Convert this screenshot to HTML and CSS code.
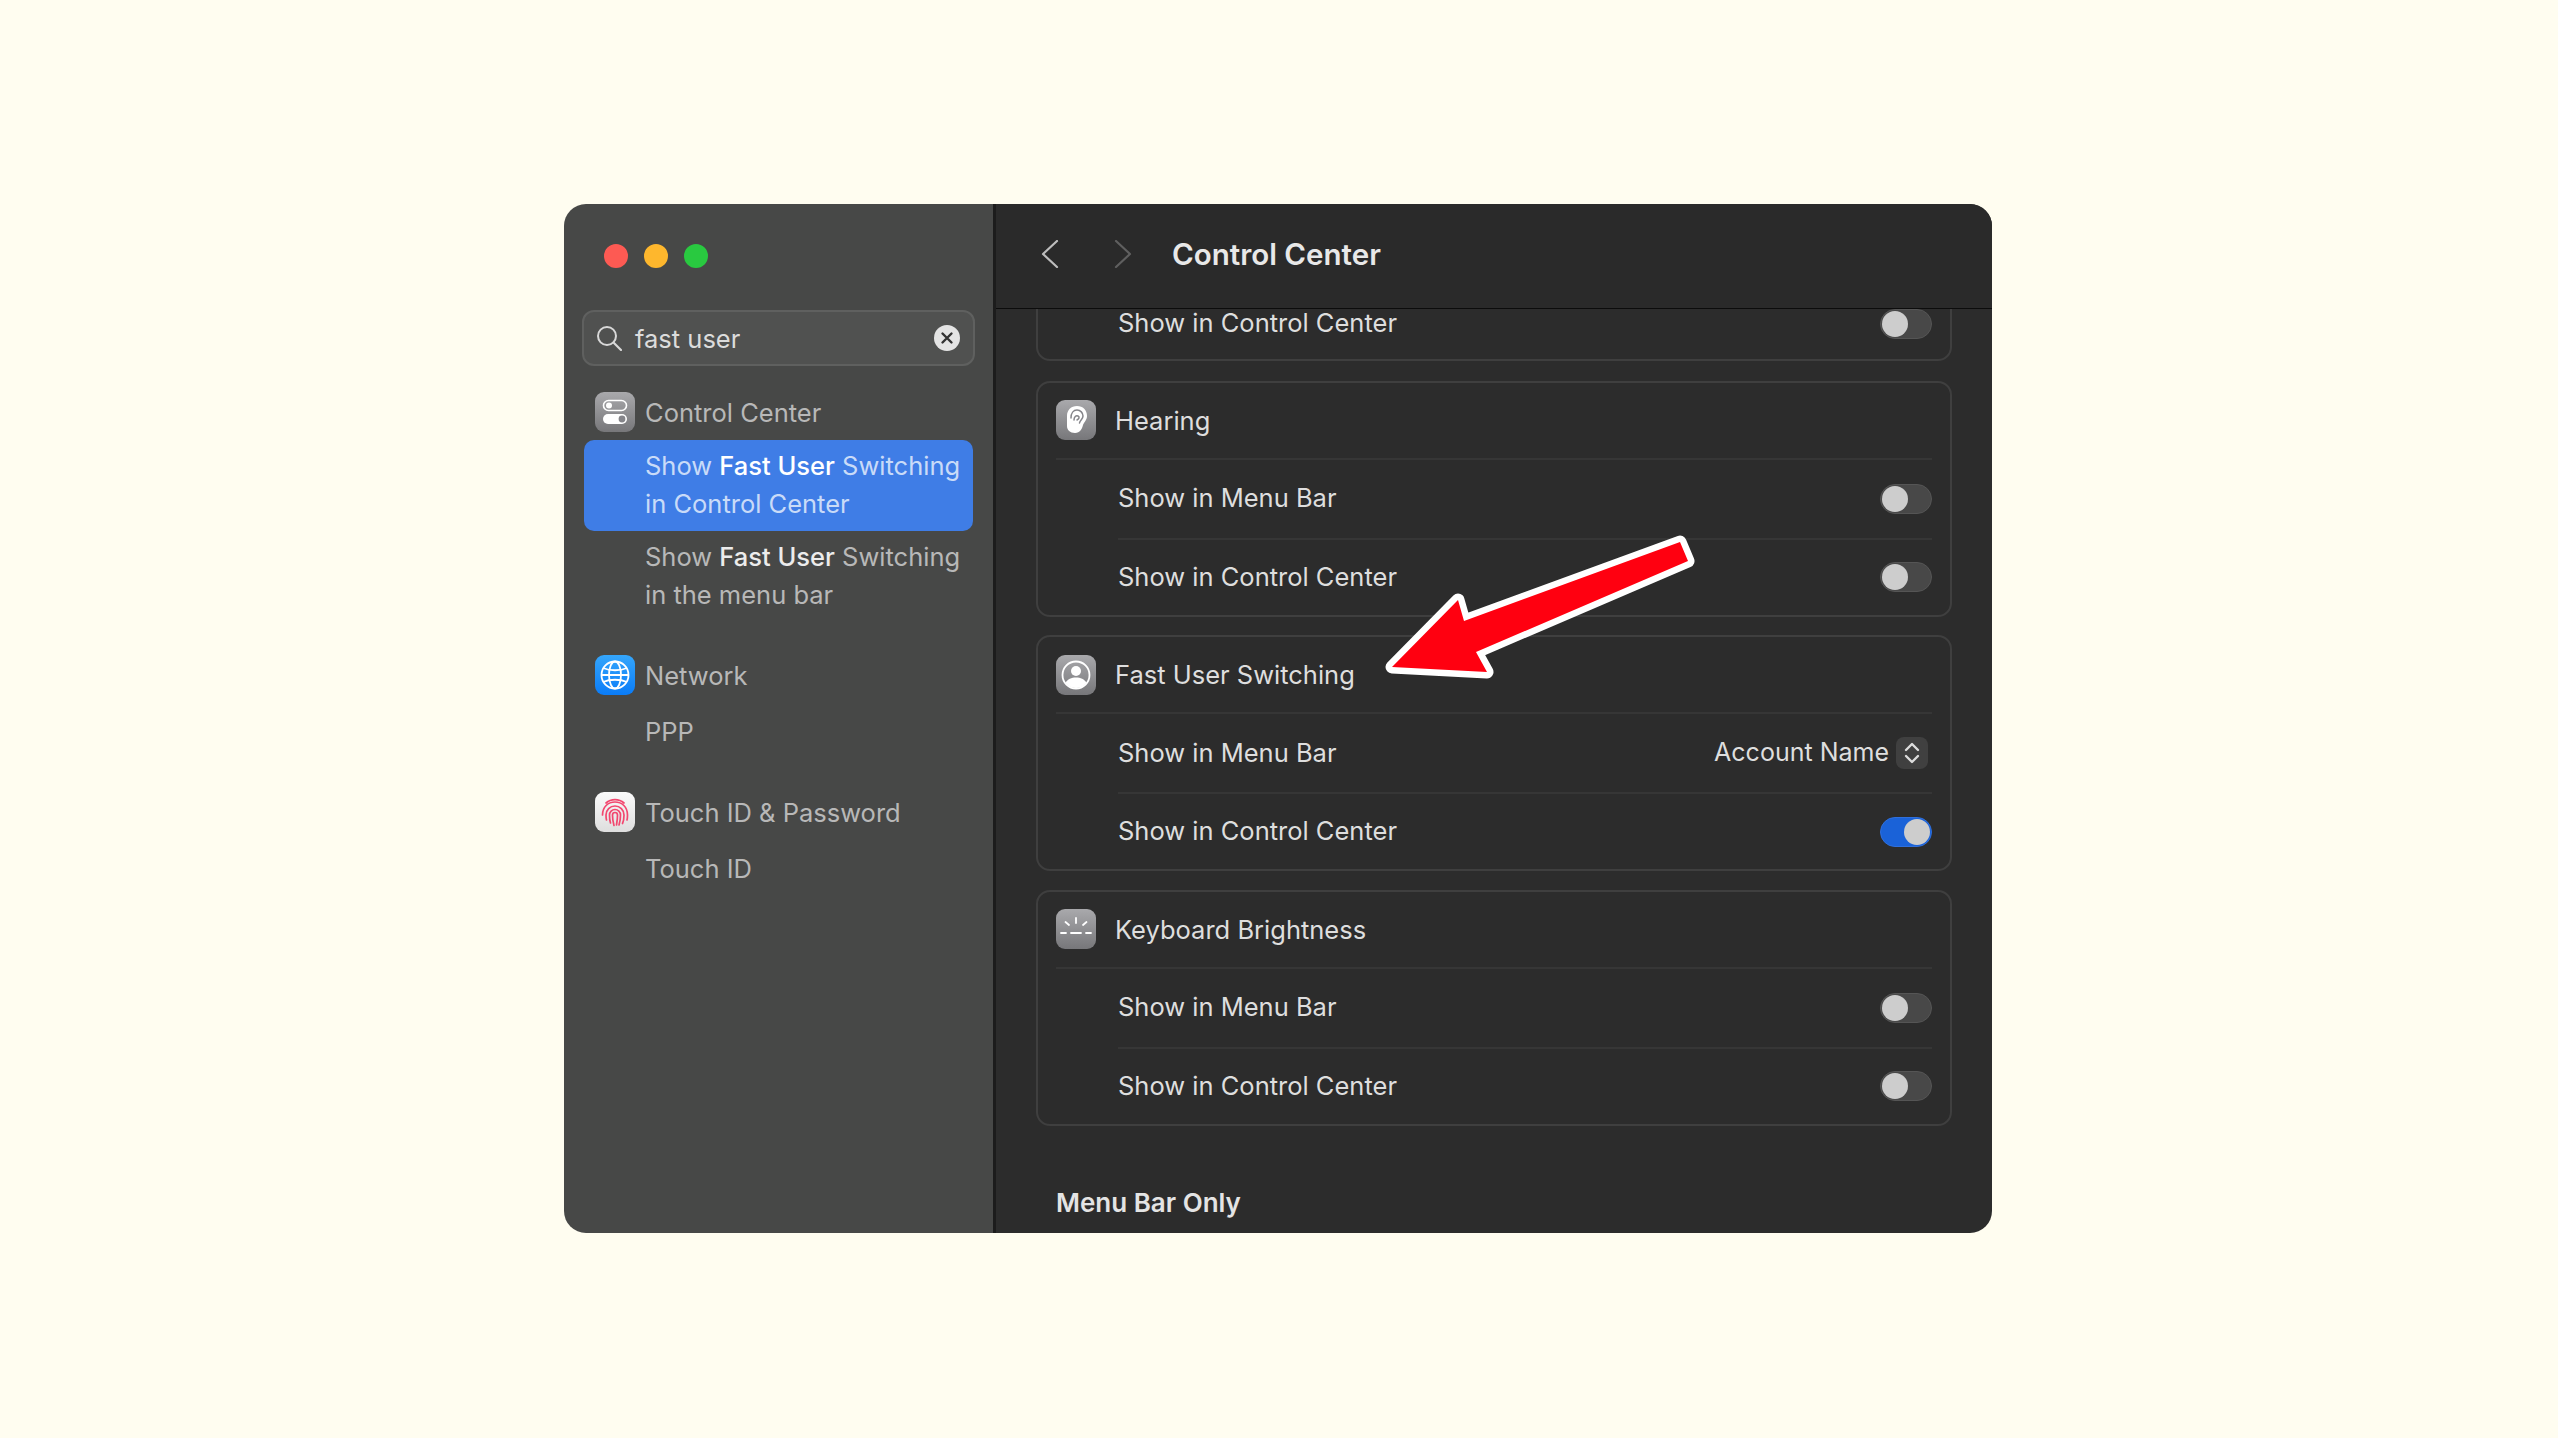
FILE: index.html
```html
<!DOCTYPE html>
<html lang="en">
<head>
<meta charset="utf-8">
<title>Control Center</title>
<link rel="stylesheet" href="styles.css">
</head>
<body>
<div class="window">
  <aside class="sidebar">
    <div class="lights">
      <span class="light red"></span>
      <span class="light yellow"></span>
      <span class="light green"></span>
    </div>
    <div class="search">
      <svg class="search-icon" viewBox="0 0 26 26"><circle cx="11" cy="11" r="9" fill="none" stroke="#d8d8d8" stroke-width="2"/><path d="M17.5 17.5L25 25" stroke="#d8d8d8" stroke-width="2.2" stroke-linecap="round"/></svg>
      <span class="search-text">fast user</span>
      <svg class="search-clear" viewBox="0 0 26 26"><circle cx="13" cy="13" r="13" fill="#e4e4e4"/><path d="M8.5 8.5l9 9M17.5 8.5l-9 9" stroke="#333" stroke-width="2.4" stroke-linecap="round"/></svg>
    </div>

    <div class="group first">
      <div class="group-head">
        <svg class="app-icon" viewBox="0 0 40 40"><rect width="40" height="40" rx="9" fill="url(#grey)"/><rect x="8.5" y="8.5" width="23" height="10" rx="5" fill="none" stroke="#fff" stroke-width="1.6"/><circle cx="14" cy="13.500" r="3" fill="#fff"/><rect x="8" y="22" width="24" height="10" rx="5" fill="#fff"/><circle cx="27" cy="27" r="3.400" fill="#85858a"/></svg>
        <span>Control Center</span>
      </div>
      <div class="result selected">Show <b>Fast User</b> Switching<br>in Control Center</div>
      <div class="result">Show <b>Fast User</b> Switching<br>in the menu bar</div>
    </div>

    <div class="group">
      <div class="group-head">
        <svg class="app-icon" viewBox="0 0 40 40"><defs><linearGradient id="blue" x1="0" y1="0" x2="0" y2="1"><stop offset="0" stop-color="#35a6fb"/><stop offset="1" stop-color="#0a7cf8"/></linearGradient></defs><rect width="40" height="40" rx="9" fill="url(#blue)"/><g fill="none" stroke="#fff" stroke-width="1.800"><circle cx="20" cy="20" r="13.500"/><ellipse cx="20" cy="20" rx="6" ry="13.500"/><path d="M8 13c7 3 17 3 24 0M8 27c7-3 17-3 24 0M6.500 20h27"/></g></svg>
        <span>Network</span>
      </div>
      <div class="sub">PPP</div>
    </div>

    <div class="group touch">
      <div class="group-head">
        <svg class="app-icon" viewBox="0 0 40 40"><defs><linearGradient id="paper" x1="0" y1="0" x2="0" y2="1"><stop offset="0" stop-color="#fbfbfb"/><stop offset="1" stop-color="#dedede"/></linearGradient></defs><rect width="40" height="40" rx="9" fill="url(#paper)"/><g fill="none" stroke="#f2476f" stroke-width="1.700" stroke-linecap="round"><path d="M11 11c5-4.500 13-4.500 18 0"/><path d="M7.500 23c0-8 5.500-13 12.500-13s12.500 5 12.500 13c0 1.500 0 3-.5 5"/><path d="M11.500 28c-.5-2-.5-3.500-.5-5 0-5 4-9 9-9s9 4 9 9c0 3-.2 6-1.500 8.500"/><path d="M15.500 31c-1-3-1-5.500-1-8 0-3 2.500-5.500 5.500-5.500s5.500 2.500 5.500 5.500c0 4-.5 7-1.500 10"/><path d="M19 33.500c-1-3.500-1.500-7-1.500-10.500 0-1.500 1-2.500 2.500-2.500s2.500 1 2.500 2.500c0 4-.5 7-1 10"/></g></svg>
        <span>Touch ID &amp; Password</span>
      </div>
      <div class="sub">Touch ID</div>
    </div>
  </aside>

  <main class="pane">
    <header class="titlebar">
      <svg class="nav" viewBox="0 0 18 28"><path d="M16 1L2 14l14 13" fill="none" stroke="#bdbdbd" stroke-width="2.200" stroke-linecap="round" stroke-linejoin="round"/></svg>
      <svg class="nav next" viewBox="0 0 18 28"><path d="M2 1l14 13L2 27" fill="none" stroke="#5f5f5f" stroke-width="2.200" stroke-linecap="round" stroke-linejoin="round"/></svg>
      <h1>Control Center</h1>
    </header>

    <div class="scroll">
      <section class="card cut">
        <div class="row only"><span>Show in Control Center</span><span class="switch"></span></div>
      </section>

      <section class="card">
        <div class="card-head">
          <svg class="app-icon" viewBox="0 0 40 40"><rect width="40" height="40" rx="9" fill="url(#grey)"/><path d="M21 6c6 0 10 4 10 10 0 4-3 6-4 9-1 4-3 8-8 8-5 0-8-3-8-7V16C11 10 15 6 21 6z" fill="#fff"/><g fill="none" stroke="#85858a" stroke-width="1.500" stroke-linecap="round"><path d="M15 18c0-5 2.500-8 6-8s6 3 6 6c0 3-3 4-3.500 7"/><path d="M18 20c0-3 2-5 4-4 2 1 1 3-1 4"/></g></svg>
          <span>Hearing</span>
        </div>
        <div class="row"><span>Show in Menu Bar</span><span class="switch"></span></div>
        <div class="row"><span>Show in Control Center</span><span class="switch"></span></div>
      </section>

      <section class="card">
        <div class="card-head">
          <svg class="app-icon" viewBox="0 0 40 40"><rect width="40" height="40" rx="9" fill="url(#grey)"/><circle cx="20" cy="20" r="13.500" fill="none" stroke="#fff" stroke-width="1.800"/><circle cx="20" cy="16" r="5" fill="#fff"/><path d="M9.500 28c2-4 6-5.500 10.500-5.500S28.500 24 30.500 28c-2.500 3-6 5-10.500 5s-8-2-10.500-5z" fill="#fff"/></svg>
          <span>Fast User Switching</span>
        </div>
        <div class="row">
          <span>Show in Menu Bar</span>
          <span class="picker">Account Name
            <svg class="stepper" viewBox="0 0 32 32"><path d="M10 13l6-6 6 6M10 19l6 6 6-6" fill="none" stroke="#dcdcdc" stroke-width="2.400" stroke-linecap="round" stroke-linejoin="round"/></svg>
          </span>
        </div>
        <div class="row"><span>Show in Control Center</span><span class="switch on"></span></div>
      </section>

      <section class="card">
        <div class="card-head">
          <svg class="app-icon" viewBox="0 0 40 40"><rect width="40" height="40" rx="9" fill="url(#grey)"/><g stroke="#fff" stroke-width="1.800" stroke-linecap="round"><path d="M20 9v5M9.500 13l3.500 3M30.500 13L27 16M5 24h5M15 24h10M30 24h5"/></g></svg>
          <span>Keyboard Brightness</span>
        </div>
        <div class="row"><span>Show in Menu Bar</span><span class="switch"></span></div>
        <div class="row"><span>Show in Control Center</span><span class="switch"></span></div>
      </section>

      <h2 class="section-title">Menu Bar Only</h2>
    </div>
  </main>

  <svg class="arrow" viewBox="0 0 1428 1029">
    <defs><linearGradient id="grey" x1="0" y1="0" x2="0" y2="1"><stop offset="0" stop-color="#a9a9ac"/><stop offset="1" stop-color="#77777a"/></linearGradient></defs>
    <polygon points="1116,338 1124,357 912,448 923,468 828,463 894,396 900,417" fill="#ff0010" stroke="#fff" stroke-width="13" stroke-linejoin="round" paint-order="stroke"/>
  </svg>
</div>
</body>
</html>
```

FILE: styles.css
```css
* {box-sizing: border-box;}

body {
  margin: 0;
  height: 1438px;
  padding: 204px 0 0 564px;
  background: #fffdf0;
  font-family: Inter, "Liberation Sans", sans-serif;
  font-size: 25.5px;
  color: #dedede;
  overflow: hidden;
}

.window {
  position: relative;
  display: flex;
  width: 1428px;
  height: 1029px;
  border-radius: 22px;
  overflow: hidden;
}

/* sidebar */
.sidebar {
  flex: none;
  width: 432px;
  background: #474847;
  border-right: 3px solid #1c1c1c;
  color: #b8b8b8;
}

.lights {
  display: flex;
  gap: 16px;
  padding: 40px 0 0 40px;
}

.light {
  width: 24px;
  height: 24px;
  border-radius: 50%;
}

.red {background: #fd5a53;}
.yellow {background: #feb72d;}
.green {background: #29c940;}

.search {
  display: flex;
  align-items: center;
  width: 393px;
  height: 56px;
  margin: 42px 0 0 18px;
  padding: 0 13px 0 12px;
  background: #505150;
  border: 2px solid #5f605f;
  border-radius: 12px;
}

.search-icon {
  width: 26px;
  height: 26px;
}

.search-text {
  flex: 1;
  margin-left: 13px;
  color: #dcdcdc;
}

.search-clear {
  width: 26px;
  height: 26px;
}

.group {
  margin-top: 33px;
}

.group.first {
  margin-top: 26px;
}

.group.touch {
  margin-top: 41px;
}

.group-head {
  display: flex;
  align-items: center;
  gap: 10px;
  height: 40px;
  padding-left: 31px;
}

.app-icon {
  flex: none;
  width: 40px;
  height: 40px;
}

.result {
  width: 389px;
  margin-left: 20px;
  padding: 7px 0 8px 61px;
  line-height: 38px;
  white-space: nowrap;
  border-radius: 10px;
}

.result b {
  font-weight: 500;
  color: #ececec;
}

.result.selected {
  margin-top: 8px;
  background: #3f7de6;
  color: #c9dbf8;
}

.result.selected b {
  color: #fff;
}

.sub {
  margin-top: 18px;
  padding-left: 81px;
  line-height: 38px;
}

/* main pane */
.pane {
  flex: 1;
  display: flex;
  flex-direction: column;
  min-width: 0;
  background: #2c2c2c;
}

.titlebar {
  flex: none;
  display: flex;
  align-items: center;
  height: 105px;
  padding: 0 0 4px 45px;
  background: #2a2a2a;
  border-bottom: 1px solid #0c0c0c;
}

.nav {
  width: 18px;
  height: 28px;
}

.nav.next {
  margin-left: 55px;
}

h1 {
  margin: 0 0 0 40px;
  font-size: 29.5px;
  font-weight: 600;
  color: #e8e8e8;
}

.scroll {
  flex: 1;
  padding: 0 40px;
  overflow: hidden;
}

.card {
  margin-bottom: 18.5px;
  padding: 0 18px;
  border: 2px solid #3f3f3f;
  border-radius: 14px;
}

.card.cut {
  margin-top: -23px;
  margin-bottom: 19.5px;
}

.card-head {
  display: flex;
  align-items: center;
  gap: 19px;
  height: 75px;
}

.row {
  display: flex;
  align-items: center;
  justify-content: space-between;
  height: 80px;
  padding: 2px 0 0 62px;
  line-height: 1.1;
  background: linear-gradient(#363636, #363636) 62px 0 / 100% 2px no-repeat;
}

.card-head + .row {
  background-position: 0 0;
}

.row:last-child {
  height: 77px;
}

.row.only {
  height: 71px;
  padding-top: 0;
  background: none;
}

.switch {
  position: relative;
  width: 52px;
  height: 30px;
  background: #484848;
  border: 1px solid #555;
  border-radius: 15px;
}

.switch::after {
  content: "";
  position: absolute;
  top: 1px;
  left: 1px;
  width: 26px;
  height: 26px;
  background: #cdcdcd;
  border-radius: 50%;
}

.switch.on {
  background: #1a62d8;
  border-color: #2f6fdc;
}

.switch.on::after {
  left: 23px;
}

.picker {
  display: flex;
  align-items: center;
  gap: 7px;
  margin-right: 4px;
  font-size: 25px;
}

.stepper {
  width: 32px;
  height: 32px;
  background: #404040;
  border-radius: 8px;
}

.section-title {
  margin: 59px 0 0 20px;
  font-size: 26px;
  font-weight: 600;
  line-height: 36px;
  color: #e4e4e4;
}

.arrow {
  position: absolute;
  top: 0;
  left: 0;
  width: 1428px;
  height: 1029px;
  pointer-events: none;
}
```
